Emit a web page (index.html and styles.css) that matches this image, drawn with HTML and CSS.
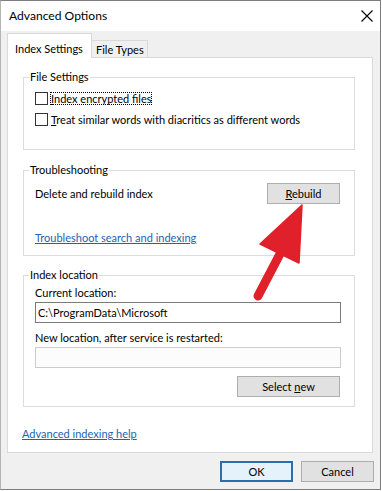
FILE: index.html
```html
<!DOCTYPE html>
<html lang="en">
<head>
<meta charset="utf-8">
<title>Advanced Options</title>
<link rel="stylesheet" href="styles.css">
</head>
<body>
<div class="window">
  <div class="titlebar">
    <span class="title">Advanced Options</span>
    <svg class="close" width="12" height="12" viewBox="0 0 12 12" aria-label="Close">
      <path d="M0.5 0.5 L11.5 11.5 M11.5 0.5 L0.5 11.5" stroke="#000" stroke-width="1.1" fill="none"/>
    </svg>
  </div>
  <div class="body">
    <div class="tabs">
      <div class="tab active">Index Settings</div>
      <div class="tab">File Types</div>
    </div>
    <div class="panel">
      <div class="group g1">
        <div class="legend">File Settings</div>
        <label class="check"><span class="box"></span><span class="text focus"><u>I</u>ndex encrypted files</span></label>
        <label class="check"><span class="box"></span><span class="text"><u>T</u>reat similar words with diacritics as different words</span></label>
      </div>
      <div class="group g2">
        <div class="legend">Troubleshooting</div>
        <div class="row">
          <span>Delete and rebuild index</span>
          <button class="btn rebuild"><u>R</u>ebuild</button>
        </div>
        <a class="link trouble" href="#">Troubleshoot search and indexing</a>
      </div>
      <div class="group g3">
        <div class="legend">Index location</div>
        <div class="label first">Current location:</div>
        <div class="textbox">C:\ProgramData\Microsoft</div>
        <div class="label second">New location, after service is restarted:</div>
        <div class="textbox disabled"></div>
        <button class="btn select">Select <u>n</u>ew</button>
      </div>
      <a class="link help" href="#">Advanced indexing help</a>
    </div>
    <div class="actions">
      <button class="btn default">OK</button>
      <button class="btn">Cancel</button>
    </div>
  </div>
  <svg class="arrow" width="382" height="491" viewBox="0 0 382 491">
    <line x1="281" y1="252" x2="258" y2="296" stroke="#e0202a" stroke-width="9" stroke-linecap="round"/>
    <polygon points="302,205 260,244 299,263" fill="#e0202a" stroke="#e0202a" stroke-width="1.5" stroke-linejoin="round"/>
  </svg>
</div>
</body>
</html>
```

FILE: styles.css
```css
* { box-sizing: border-box; }
html, body { margin: 0; padding: 0; background: #ffffff; }
body {
  font-family: Lato, "Liberation Sans", sans-serif;
  font-size: 11px;
  line-height: 16px;
  color: #000;
}
.window {
  position: relative;
  width: 381px;
  height: 490px;
  border: 1px solid #7d7d7d;
  border-left-color: #b4b4b4;
  background: #f0f0f0;
  display: flex;
  flex-direction: column;
}
.titlebar {
  height: 30px;
  background: #fff;
  display: flex;
  align-items: center;
  padding: 0 7px 0 8px;
}
.title { flex: 1; font-size: 12.1px; }
.close { display: block; }
.body {
  flex: 1;
  display: flex;
  flex-direction: column;
  padding: 2px 7px 7px 6px;
}
.tabs {
  display: flex;
  height: 25px;
  margin-bottom: -1px;
  position: relative;
  z-index: 1;
}
.tab {
  width: 56px;
  height: 17px;
  margin-top: 7px;
  padding: 1px 0 0 4px;
  border-top: 1px solid #d9d9d9;
  border-right: 1px solid #d9d9d9;
  background: #f0f0f0;
  white-space: nowrap;
}
.tab.active {
  width: 85px;
  height: 25px;
  margin-top: 0;
  padding: 7px 0 0 7px;
  border-left: 1px solid #d9d9d9;
  background: #fff;
}
.panel {
  height: 396px;
  background: #fff;
  border: 1px solid #d9d9d9;
  display: flex;
  flex-direction: column;
  padding: 0 17px 0 15px;
}
.group {
  border: 1px solid #dcdcdc;
  display: flex;
  flex-direction: column;
  padding-left: 11px;
  padding-right: 14px;
}
.legend {
  align-self: flex-start;
  height: 16px;
  margin: -9px 0 0 -6px;
  padding: 0 1px;
  background: #fff;
  white-space: nowrap;
}
.g1 { margin-top: 19px; padding-bottom: 22px; }
.g2 { margin-top: 20px; padding-bottom: 9px; }
.g3 { margin-top: 19px; padding-bottom: 9px; }
.check {
  display: flex;
  align-items: center;
  gap: 2px;
  height: 15px;
  margin-top: 6px;
  white-space: nowrap;
}
.box {
  width: 13px;
  height: 13px;
  border: 1px solid #333;
  background: #fff;
  flex: none;
}
.check .text {
  height: 13px;
  line-height: 11px;
  padding-left: 0;
  border: 1px solid transparent;
}
.check .focus { border: 1px dotted #000; }
.row {
  display: flex;
  align-items: center;
  justify-content: space-between;
  height: 21px;
  margin-top: 5px;
}
.btn {
  font: inherit;
  color: #000;
  height: 21px;
  padding: 0;
  background: #e1e1e1;
  border: 1px solid #adadad;
  border-radius: 0;
  line-height: 18px;
}
.rebuild { width: 73px; }
.select { width: 103px; align-self: flex-end; margin-top: 8px; }
.link {
  color: #1a64b0;
  text-decoration: underline;
  align-self: flex-start;
  height: 16px;
  white-space: nowrap;
}
.trouble { margin-top: 26px; }
.help { margin-top: 19px; margin-left: -1px; }
.label { height: 16px; white-space: nowrap; }
.label.first { margin-top: 2px; }
.label.second { margin-top: 7px; }
.textbox {
  width: 306px;
  height: 21px;
  margin-top: 1px;
  border: 1px solid #7a7a7a;
  background: #fff;
  padding: 1px 0 0 2px;
  line-height: 17px;
  white-space: nowrap;
}
.textbox.disabled { border-color: #cccccc; background: #fcfcfc; }
.actions {
  display: flex;
  justify-content: flex-end;
  gap: 8px;
  margin-top: 8px;
  margin-right: -1px;
}
.actions .btn { width: 73px; }
.btn.default {
  border: 2px solid #2870ad;
  background: #e5f1fb;
  line-height: 16px;
}
.arrow {
  position: absolute;
  left: -1px;
  top: -1px;
  pointer-events: none;
}
```
